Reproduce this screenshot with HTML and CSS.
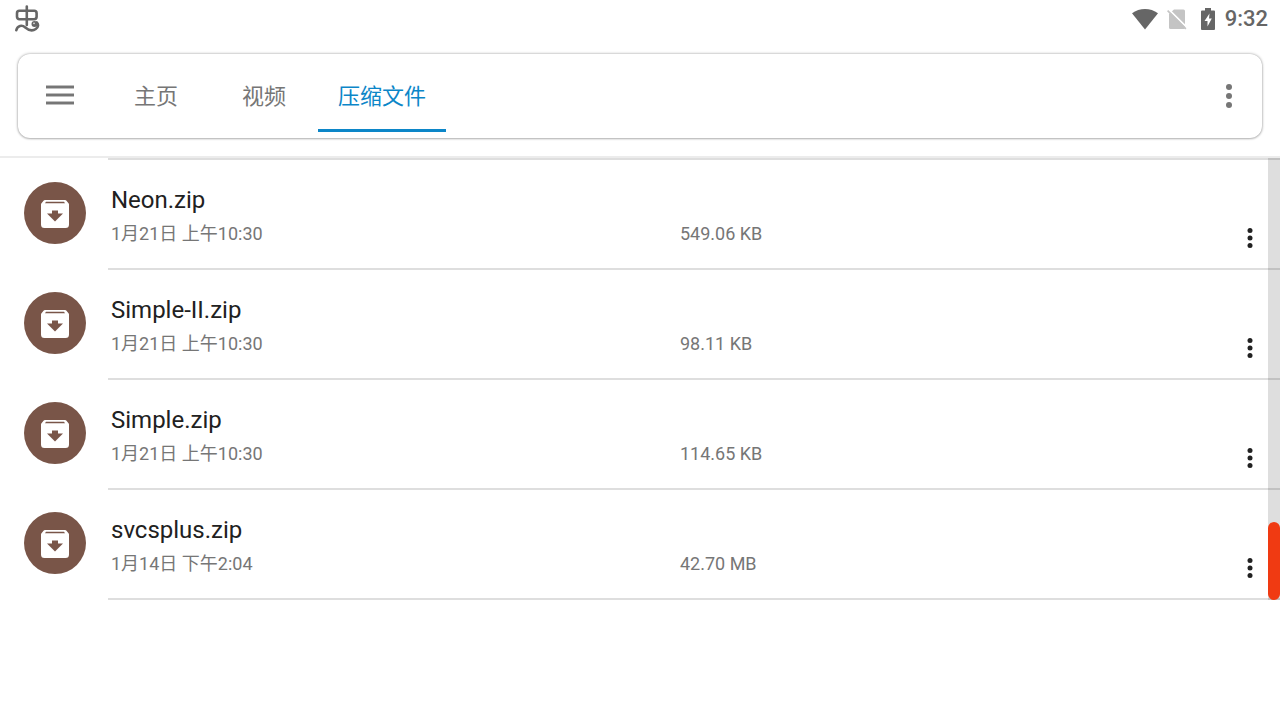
FILE: index.html
```html
<!DOCTYPE html>
<html lang="zh-CN">
<head>
    <meta charset="UTF-8">
    <meta name="viewport" content="width=device-width, initial-scale=1.0">
    <title>压缩文件</title>
    <link rel="stylesheet" href="styles.css">
</head>
<body>

<!-- Shared icons -->
<svg class="symbols" aria-hidden="true">
    <symbol id="icon-archive" viewBox="0 0 28 28">
        <path fill="#fff" d="M4 0h20a2 2 0 0 1 1.500.7l2 2.600a2 2 0 0 1 .5 1.500V24.500a3.500 3.500 0 0 1-3.500 3.500h-21A3.500 3.500 0 0 1 0 24.500V4.800a2 2 0 0 1 .5-1.500l2-2.600A2 2 0 0 1 4 0z"/>
        <path fill="#795548" d="M5 1.800h18l1 1.400H4zM11 10.500h6v3h5l-8 8-8-8h5z"/>
    </symbol>
    <symbol id="icon-more" viewBox="0 0 6 20">
        <circle cx="3" cy="2.500" r="2.500"/>
        <circle cx="3" cy="10" r="2.500"/>
        <circle cx="3" cy="17.500" r="2.500"/>
    </symbol>
</svg>

<div class="status-bar">
    <svg class="logo" viewBox="0 0 26 28" fill="none" stroke="#666" stroke-width="2.600" stroke-linecap="round">
        <rect x="3" y="5.800" width="19.600" height="8.400" rx="2.400"/>
        <path d="M12.800 1.500v18.500M2.300 25.200c1.200-4.800 5.700-5.600 9-2.800 3.500 3 7.500 3.600 10.500 1.600 2.600-1.800 2.900-4.800 1-6.500"/>
        <circle cx="20.500" cy="19" r="3" fill="#666" stroke="none"/>
        <circle cx="20" cy="18.300" r="0.900" fill="#ddd" stroke="none"/>
    </svg>
    <div class="status-icons">
        <svg class="wifi" viewBox="0 0 26 21" fill="#666">
            <path d="M13 20.500L0 4.300C7.500-1.400 18.500-1.400 26 4.300z"/>
        </svg>
        <svg class="no-sim" viewBox="0 0 20 21">
            <path fill="#c4c4c4" d="M7 0.500h9.500a1.500 1.500 0 0 1 1.500 1.500v16.500a1.500 1.500 0 0 1-1.500 1.500H3.500A1.500 1.500 0 0 1 2 18.500V5z"/>
            <path fill="none" stroke="#fff" stroke-width="1.800" d="M2.200 0.800l18.300 18.300"/>
            <path fill="none" stroke="#c4c4c4" stroke-width="1.600" d="M0.600 1.600l18.300 18.300"/>
        </svg>
        <svg class="battery" viewBox="0 0 14 22">
            <path fill="#666" d="M4 0h6v2.500h3a1 1 0 0 1 1 1V21a1 1 0 0 1-1 1H1a1 1 0 0 1-1-1V3.500a1 1 0 0 1 1-1h3z"/>
            <path fill="#fff" d="M8.500 5.500L3.500 13H6.500v5.500L10.800 10.500H8z"/>
        </svg>
        <span class="clock">9:32</span>
    </div>
</div>

<header class="toolbar">
    <button class="menu-button" type="button" aria-label="菜单">
        <svg viewBox="0 0 28 20">
            <path fill="#bdbdbd" d="M0 0h28v4H0zM0 8h28v4H0zM0 16h28v4H0z"/>
            <path fill="#767676" d="M0 1h28v2H0zM0 9h28v2H0zM0 17h28v2H0z"/>
        </svg>
    </button>
    <nav class="tabs">
        <a class="tab" href="#home">主页</a>
        <a class="tab" href="#video">视频</a>
        <a class="tab active" href="#archive">压缩文件</a>
    </nav>
    <button class="toolbar-more" type="button" aria-label="更多选项">
        <svg viewBox="0 0 6 24" fill="#767676"><circle cx="3" cy="3" r="3"/><circle cx="3" cy="12" r="3"/><circle cx="3" cy="21" r="3"/></svg>
    </button>
</header>

<main class="files">
    <ul class="file-list">
        <li class="file">
            <span class="file-icon"><svg><use href="#icon-archive"/></svg></span>
            <div class="file-body">
                <div class="file-main">
                    <a class="file-name" href="#neon">Neon.zip</a>
                    <span class="file-meta">1月21日 上午10:30</span>
                </div>
                <span class="file-meta file-size">549.06 KB</span>
                <button class="file-more" type="button" aria-label="更多"><svg><use href="#icon-more"/></svg></button>
            </div>
        </li>
        <li class="file">
            <span class="file-icon"><svg><use href="#icon-archive"/></svg></span>
            <div class="file-body">
                <div class="file-main">
                    <a class="file-name" href="#simple-ii">Simple-II.zip</a>
                    <span class="file-meta">1月21日 上午10:30</span>
                </div>
                <span class="file-meta file-size">98.11 KB</span>
                <button class="file-more" type="button" aria-label="更多"><svg><use href="#icon-more"/></svg></button>
            </div>
        </li>
        <li class="file">
            <span class="file-icon"><svg><use href="#icon-archive"/></svg></span>
            <div class="file-body">
                <div class="file-main">
                    <a class="file-name" href="#simple">Simple.zip</a>
                    <span class="file-meta">1月21日 上午10:30</span>
                </div>
                <span class="file-meta file-size">114.65 KB</span>
                <button class="file-more" type="button" aria-label="更多"><svg><use href="#icon-more"/></svg></button>
            </div>
        </li>
        <li class="file">
            <span class="file-icon"><svg><use href="#icon-archive"/></svg></span>
            <div class="file-body">
                <div class="file-main">
                    <a class="file-name" href="#svcsplus">svcsplus.zip</a>
                    <span class="file-meta">1月14日 下午2:04</span>
                </div>
                <span class="file-meta file-size">42.70 MB</span>
                <button class="file-more" type="button" aria-label="更多"><svg><use href="#icon-more"/></svg></button>
            </div>
        </li>
    </ul>
    <div class="scroll-track"><div class="scroll-thumb"></div></div>
</main>

</body>
</html>
```
FILE: styles.css
```css
* {
    box-sizing: border-box;
}
body {
    margin: 0;
    background-color: #fff;
    color: #212121;
    font-family: Roboto, "Noto Sans CJK SC", sans-serif;
}
svg {
    display: block;
}
a {
    color: inherit;
    text-decoration: none;
}
button {
    display: flex;
    align-items: center;
    justify-content: center;
    padding: 0;
    border: none;
    background: none;
    cursor: pointer;
}
.symbols {
    display: none;
}

/* Status bar */
.status-bar {
    display: flex;
    justify-content: space-between;
    align-items: center;
    height: 36px;
    padding: 2px 12px 0 14px;
}
.logo {
    width: 26px;
    height: 28px;
}
.status-icons {
    display: flex;
    align-items: center;
    color: #666;
}
.wifi {
    width: 26px;
    height: 21px;
    margin-right: 9px;
}
.no-sim {
    width: 20px;
    height: 21px;
    margin-right: 14px;
}
.battery {
    width: 14px;
    height: 22px;
    margin-right: 10px;
}
.clock {
    font-size: 22px;
    font-weight: 500;
    line-height: 34px;
}

/* Toolbar */
.toolbar {
    display: flex;
    align-items: center;
    height: 84px;
    margin: 18px;
    padding: 0 24px 0 28px;
    border-radius: 12px;
    box-shadow: 0 0 3px rgba(0, 0, 0, 0.4), 0 1px 2px rgba(0, 0, 0, 0.15);
}
.menu-button {
    padding-bottom: 2px;
}
.menu-button svg {
    width: 28px;
    height: 20px;
}
.tabs {
    display: flex;
    margin-left: 28px;
}
.tab {
    min-width: 108px;
    padding: 15px 20px 10px;
    border-bottom: 3px solid transparent;
    color: #767676;
    font-size: 22px;
    line-height: 44px;
    text-align: center;
}
.tab.active {
    color: #0c86c8;
    border-bottom-color: #0c86c8;
}
.toolbar-more {
    width: 18px;
    height: 48px;
    margin-left: auto;
}
.toolbar-more svg {
    width: 6px;
    height: 24px;
}

/* File list */
.files {
    position: relative;
    border-top: 2px solid #ececec;
}
.file-list {
    margin: 0;
    padding: 0;
    list-style: none;
}
.file {
    display: flex;
}
.file-icon {
    display: flex;
    align-items: center;
    justify-content: center;
    flex: none;
    width: 62px;
    height: 62px;
    margin: 24px 22px 0 24px;
    padding-top: 2px;
    border-radius: 50%;
    background-color: #795548;
}
.file-icon svg {
    width: 28px;
    height: 28px;
}
.file-body {
    display: grid;
    grid-template-columns: 49% 1fr 28px;
    column-gap: 4px;
    align-items: end;
    flex: 1;
    padding: 26px 16px 14px 3px;
    border-bottom: 2px solid #dedede;
}
.file:first-child .file-body {
    border-top: 2px solid #dedede;
}
.file:not(:first-child) .file-icon {
    margin-top: 22px;
}
.file-main {
    display: flex;
    flex-direction: column;
    gap: 8px;
}
.file-main,
.file-size {
    margin-bottom: 8px;
}
.file-name {
    font-size: 24px;
    line-height: 28px;
}
.file-meta {
    color: #767676;
    font-size: 18px;
    line-height: 24px;
}
.file-more {
    height: 32px;
}
.file-more svg {
    width: 6px;
    height: 20px;
    fill: #212121;
}

/* Scrollbar drawn over the right edge of the list */
.scroll-track {
    position: absolute;
    top: 0;
    right: 0;
    bottom: 0;
    display: flex;
    align-items: flex-end;
    width: 12px;
    background-color: rgba(0, 0, 0, 0.13);
}
.scroll-thumb {
    width: 12px;
    height: 78px;
    border-radius: 6px;
    background-color: #f03a12;
}
```
